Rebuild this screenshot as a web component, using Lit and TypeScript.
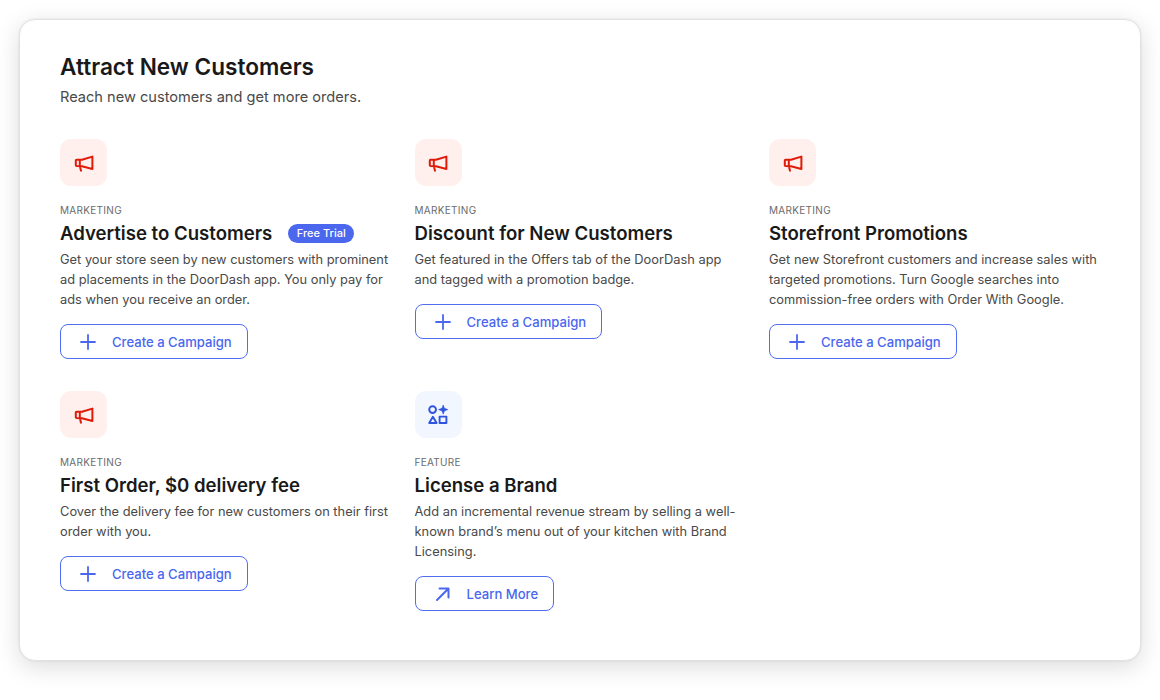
import {LitElement, html, css, svg} from 'lit';
import {customElement, property} from 'lit/decorators.js';

const megaphone = svg`<path d="M1.8 7.6 Q1.8 6.8 2.6 6.8 L8 6.8 L18.4 3.6 L18.4 16 L8 13.2 L2.6 13 Q1.8 13 1.8 12.2 Z M5.8 6.8 L5.8 13.1 L7 17.8" fill="none" stroke="currentColor" stroke-width="2" stroke-linecap="round" stroke-linejoin="round"/>`;

const shapes = svg`<g fill="none" stroke="currentColor" stroke-width="1.9" stroke-linejoin="round"><circle cx="4.6" cy="4.6" r="3.4"/><path d="M1.2 18 L4.9 11.8 L8.6 18 Z"/><rect x="11.6" y="11.6" width="6.8" height="6.4"/></g><path d="M15.2 0 L16.4 3.3 L19.8 4.6 L16.4 5.9 L15.2 9.2 L14 5.9 L10.6 4.6 L14 3.3 Z" fill="currentColor" stroke="currentColor" stroke-width="0.6" stroke-linejoin="round"/>`;

const plus = svg`<path d="M8 1v14M1 8h14" fill="none" stroke="currentColor" stroke-width="1.8" stroke-linecap="round"/>`;
const arrow = svg`<path d="M2 14 L13.5 2.5 M4.5 2.5 H13.5 V11.5" fill="none" stroke="currentColor" stroke-width="2" stroke-linecap="round" stroke-linejoin="round"/>`;

@customElement('promo-item')
export class PromoItem extends LitElement {
  @property() kind: 'marketing' | 'feature' = 'marketing';
  @property() label = 'MARKETING';
  @property() heading = '';
  @property() text = '';
  @property() badge = '';
  @property() action = 'Create a Campaign';

  override render() {
    const feature = this.kind === 'feature';
    return html`
      <div class="icon ${feature ? 'blue' : 'red'}">
        ${feature
          ? html`<svg width="20" height="20" viewBox="0 0 20 20">${shapes}</svg>`
          : html`<svg width="20" height="20" viewBox="0 0 20 20">${megaphone}</svg>`}
      </div>
      <div class="label">${this.label}</div>
      <div class="title">
        <span>${this.heading}</span>
        ${this.badge ? html`<span class="badge">${this.badge}</span>` : ''}
      </div>
      <p>${this.text}</p>
      <button>
        <svg width="16" height="16" viewBox="0 0 16 16">${feature ? arrow : plus}</svg>
        <span>${this.action}</span>
      </button>
    `;
  }

  static override styles = css`
    :host {
      display: block;
    }

    .icon {
      width: 47px;
      height: 47px;
      border-radius: 11px;
      display: flex;
      align-items: center;
      justify-content: center;
    }

    .red {
      background: #fff0ed;
      color: #e01a08;
    }

    .blue {
      background: #f2f6fe;
      color: #2f55e0;
    }

    .label {
      margin-top: 17px;
      font-size: 10px;
      line-height: 14px;
      letter-spacing: 0.3px;
      color: #6b6b6b;
    }

    .title {
      margin-top: 2px;
      display: flex;
      align-items: center;
      gap: 16px;
      font-size: 18.6px;
      line-height: 28px;
      font-weight: 600;
      color: #191919;
    }

    .badge {
      height: 19px;
      padding: 0 8.5px;
      border-radius: 10px;
      background: #4a67ee;
      color: #fff;
      font-size: 11px;
      line-height: 19px;
      font-weight: 500;
    }

    p {
      margin: 3px 0 0;
      font-size: 12.85px;
      line-height: 20px;
      color: #494949;
    }

    button {
      margin-top: 14px;
      height: 35px;
      padding: 0 15px 0 19px;
      display: flex;
      align-items: center;
      gap: 16px;
      background: #fff;
      border: 1px solid #4f6ef0;
      border-radius: 8px;
      color: #4a67ee;
      font: inherit;
      font-size: 13.1px;
      font-weight: 500;
    }
  `;
}

@customElement('app-root')
export class AppRoot extends LitElement {
  override render() {
    return html`
      <section class="card">
        <h1>Attract New Customers</h1>
        <div class="sub">Reach new customers and get more orders.</div>
        <div class="grid">
          <promo-item
            heading="Advertise to Customers"
            badge="Free Trial"
            text="Get your store seen by new customers with prominent ad placements in the DoorDash app. You only pay for ads when you receive an order."
          ></promo-item>
          <promo-item
            heading="Discount for New Customers"
            text="Get featured in the Offers tab of the DoorDash app and tagged with a promotion badge."
          ></promo-item>
          <promo-item
            heading="Storefront Promotions"
            text="Get new Storefront customers and increase sales with targeted promotions. Turn Google searches into commission-free orders with Order With Google."
          ></promo-item>
          <promo-item
            heading="First Order, $0 delivery fee"
            text="Cover the delivery fee for new customers on their first order with you."
          ></promo-item>
          <promo-item
            kind="feature"
            label="FEATURE"
            heading="License a Brand"
            action="Learn More"
            text="Add an incremental revenue stream by selling a well-known brand’s menu out of your kitchen with Brand Licensing."
          ></promo-item>
        </div>
      </section>
    `;
  }

  static override styles = css`
    :host {
      display: block;
      width: 1160px;
      height: 700px;
      box-sizing: border-box;
      padding: 19px;
      background: #fff;
      font-family: Inter, 'Liberation Sans', sans-serif;
    }

    .card {
      box-sizing: border-box;
      height: 642px;
      width: 1122px;
      padding: 32px 40px 0 40px;
      background: #fff;
      border: 1px solid #e2e2e2;
      border-radius: 16px;
      box-shadow: 0 0 0 1px rgba(0, 0, 0, 0.03), 0 6px 24px rgba(0, 0, 0, 0.14);
    }

    h1 {
      margin: 0;
      font-size: 22.6px;
      line-height: 30px;
      font-weight: 600;
      color: #191919;
    }

    .sub {
      margin-top: 5px;
      font-size: 14.6px;
      line-height: 20px;
      color: #494949;
    }

    .grid {
      margin-top: 32px;
      display: grid;
      grid-template-columns: repeat(3, 331px);
      column-gap: 23.5px;
      row-gap: 32px;
    }
  `;
}
